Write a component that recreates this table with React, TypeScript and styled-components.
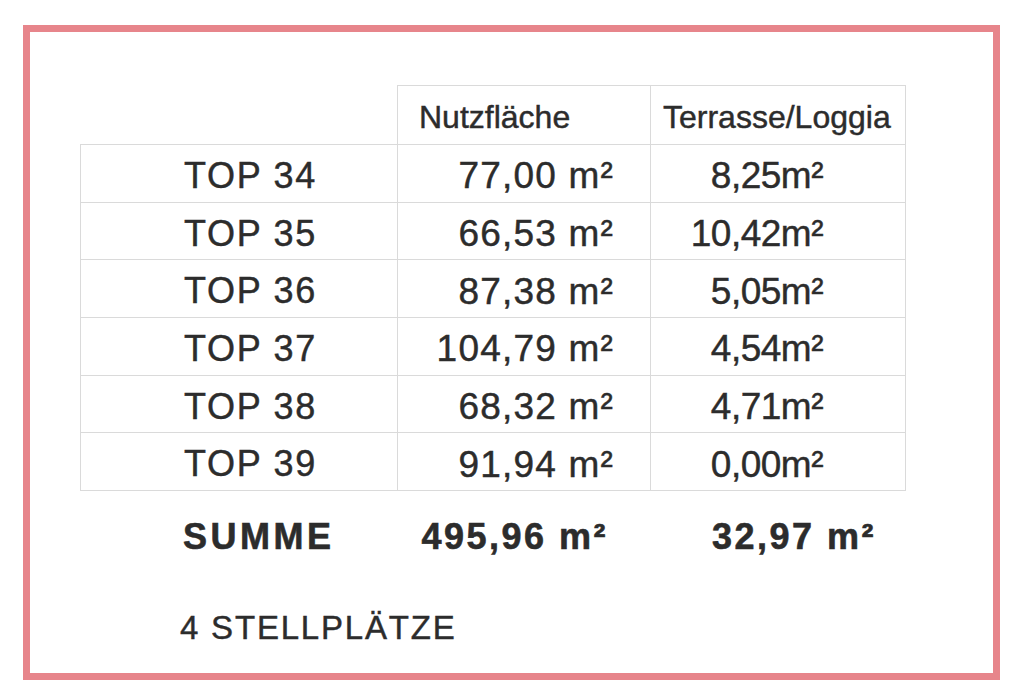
import React from "react";
import styled, { createGlobalStyle } from "styled-components";

const GlobalStyle = createGlobalStyle`
  html, body {
    margin: 0;
    padding: 0;
    background: #ffffff;
  }
  body {
    font-family: "Liberation Sans", Arial, sans-serif;
  }
`;

const Page = styled.div`
  box-sizing: border-box;
  width: 1024px;
  height: 690px;
  padding: 25px 24px 10px 23px;
  background: #ffffff;
`;

const Frame = styled.div`
  box-sizing: border-box;
  width: 977px;
  height: 655px;
  border: 7px solid #e7858b;
  padding: 53px 0 0 50px;
  display: flex;
  flex-direction: column;
  color: #2c2c2c;
  -webkit-text-stroke: 0.45px #2c2c2c;
  font-family: "Liberation Sans", Arial, sans-serif;
`;

const AreaTable = styled.table`
  border-collapse: collapse;
  table-layout: fixed;
  width: 825px;
`;

const HeadRow = styled.tr`
  height: 59px;
`;

const BodyRow = styled.tr`
  height: 57.7px;
`;

const HeadCell = styled.th<{ $pad: number; $blank?: boolean }>`
  border: ${(p) => (p.$blank ? "none" : "1px solid #dadada")};
  padding: 4px 0 0 ${(p) => p.$pad}px;
  text-align: left;
  font-weight: normal;
  font-size: 32px;
  line-height: 1;
  white-space: nowrap;
  vertical-align: middle;
`;

const LabelCell = styled.td`
  border: 1px solid #dadada;
  padding: 5px 0 0 103px;
  text-align: left;
  font-size: 36px;
  letter-spacing: 1.7px;
  line-height: 1;
  white-space: nowrap;
  vertical-align: middle;
`;

const ValueCell = styled.td<{ $pad: number; $spacing: number }>`
  border: 1px solid #dadada;
  padding: 5px ${(p) => p.$pad}px 0 0;
  text-align: right;
  font-size: 37px;
  letter-spacing: ${(p) => p.$spacing}px;
  line-height: 1;
  white-space: nowrap;
  vertical-align: middle;
`;

const SumRow = styled.div`
  display: grid;
  grid-template-columns: 317px 253px 255px;
  height: 52px;
  margin-top: 20px;
  align-items: center;
  font-weight: bold;
  -webkit-text-stroke: 0.6px #2c2c2c;
`;

const SumLabel = styled.div`
  padding-left: 103px;
  font-size: 36px;
  letter-spacing: 3.5px;
  line-height: 1;
  white-space: nowrap;
`;

const SumValue = styled.div<{ $pad: number }>`
  padding-right: ${(p) => p.$pad}px;
  text-align: right;
  font-size: 36px;
  letter-spacing: 2.5px;
  line-height: 1;
  white-space: nowrap;
`;

const Note = styled.div`
  margin-top: 44px;
  padding-left: 100px;
  height: 40px;
  display: flex;
  align-items: center;
  font-size: 33px;
  letter-spacing: 1.8px;
  line-height: 1;
  white-space: nowrap;
`;

const rows = [
  { top: "TOP 34", area: "77,00 m²", terrace: "8,25m²" },
  { top: "TOP 35", area: "66,53 m²", terrace: "10,42m²" },
  { top: "TOP 36", area: "87,38 m²", terrace: "5,05m²" },
  { top: "TOP 37", area: "104,79 m²", terrace: "4,54m²" },
  { top: "TOP 38", area: "68,32 m²", terrace: "4,71m²" },
  { top: "TOP 39", area: "91,94 m²", terrace: "0,00m²" },
];

export default function App() {
  return (
    <>
      <GlobalStyle />
      <Page>
        <Frame>
          <AreaTable>
            <colgroup>
              <col style={{ width: 317 }} />
              <col style={{ width: 253 }} />
              <col style={{ width: 255 }} />
            </colgroup>
            <thead>
              <HeadRow>
                <HeadCell $pad={0} $blank />
                <HeadCell $pad={21}>Nutzfläche</HeadCell>
                <HeadCell $pad={12}>Terrasse/Loggia</HeadCell>
              </HeadRow>
            </thead>
            <tbody>
              {rows.map((r) => (
                <BodyRow key={r.top}>
                  <LabelCell>{r.top}</LabelCell>
                  <ValueCell $pad={36} $spacing={1.2}>
                    {r.area}
                  </ValueCell>
                  <ValueCell $pad={82} $spacing={-0.5}>
                    {r.terrace}
                  </ValueCell>
                </BodyRow>
              ))}
            </tbody>
          </AreaTable>
          <SumRow>
            <SumLabel>SUMME</SumLabel>
            <SumValue $pad={42}>495,96 m²</SumValue>
            <SumValue $pad={29}>32,97 m²</SumValue>
          </SumRow>
          <Note>4 STELLPLÄTZE</Note>
        </Frame>
      </Page>
    </>
  );
}
